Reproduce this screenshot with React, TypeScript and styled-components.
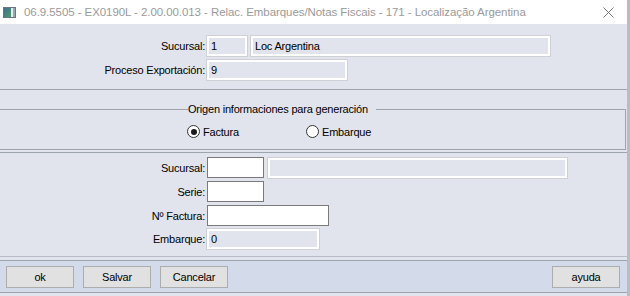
import styled, { createGlobalStyle } from "styled-components";

const GlobalStyle = createGlobalStyle`
  html, body {
    margin: 0;
    padding: 0;
    background: #ffffff;
  }
  body {
    font-family: "Liberation Sans", Arial, sans-serif;
    font-size: 11px;
    letter-spacing: -0.2px;
    color: #000;
  }
`;

const Window = styled.div`
  width: 630px;
  height: 296px;
  box-sizing: border-box;
  display: flex;
  flex-direction: column;
  border-right: 3px solid #b9bcc3;
  background: #e1e4ec;
  overflow: hidden;
`;

const TitleBar = styled.div`
  height: 24px;
  flex: none;
  background: #ffffff;
  display: flex;
  align-items: center;
  padding-left: 3px;
  gap: 8px;
`;

const Title = styled.span`
  flex: 1;
  font-size: 11.5px;
  color: #9a9a9a;
  white-space: nowrap;
  letter-spacing: -0.07px;
`;

const CloseButton = styled.span`
  width: 30px;
  height: 24px;
  display: flex;
  align-items: center;
  justify-content: center;
  margin-right: 4px;
`;

const Section = styled.div<{ $top: number; $bottom: number; $line?: string }>`
  padding: ${(p) => p.$top}px 0 ${(p) => p.$bottom}px;
  border-bottom: 1px solid ${(p) => p.$line ?? "#9ea4ae"};
`;

const Form = styled.div<{ $gap: number }>`
  display: grid;
  grid-template-columns: 205px 1fr;
  column-gap: 2px;
  row-gap: ${(p) => p.$gap}px;
  align-items: center;
`;

const Label = styled.span`
  text-align: right;
  white-space: nowrap;
`;

const Fields = styled.div`
  display: flex;
  gap: 4px;
  align-items: center;
`;

const ReadOnly = styled.div<{ $w: number }>`
  width: ${(p) => p.$w}px;
  height: 20px;
  box-sizing: border-box;
  border: 2px solid #ffffff;
  box-shadow: 0 0 0 1px #cfd1d6;
  padding: 0 2px;
  display: flex;
  align-items: center;
  background: #e1e4ec;
`;

const Editable = styled.div<{ $w: number }>`
  width: ${(p) => p.$w}px;
  height: 21px;
  box-sizing: border-box;
  border: 1px solid #7a7a7a;
  background: #ffffff;
`;

const Group = styled.fieldset`
  margin: 13px 1px 0 0;
  padding: 0;
  border: none;
  border-top: 1px solid #9ea4ae;
  border-right: 1px solid #9ea4ae;
  border-bottom: 1px solid #9ea4ae;
  height: 47px;
  box-sizing: border-box;
`;

const Legend = styled.legend`
  margin-left: 188px;
  padding: 0 8px 0 0;
  line-height: 13px;
`;

const RadioRow = styled.div`
  display: flex;
  align-items: center;
  padding: 9px 0 0 187px;
`;

const RadioOption = styled.label<{ $w: number }>`
  width: ${(p) => p.$w}px;
  display: flex;
  align-items: center;
  gap: 3px;
`;

const RadioCircle = styled.span<{ $on?: boolean }>`
  width: 13px;
  height: 13px;
  box-sizing: border-box;
  border-radius: 50%;
  border: 1px solid #333333;
  background: #ffffff;
  display: flex;
  align-items: center;
  justify-content: center;
  &::after {
    content: "";
    width: 6px;
    height: 6px;
    border-radius: 50%;
    background: ${(p) => (p.$on ? "#1a1a1a" : "transparent")};
  }
`;

const Gap = styled.div`
  height: 2px;
  border-bottom: 1px solid #9ea4ae;
`;

const Spacer = styled.div`
  height: 3px;
  flex: none;
`;

const ButtonBar = styled.div`
  flex: none;
  height: 31px;
  background: #d3dbeb;
  border-top: 1px solid #9ea4ae;
  border-bottom: 1px solid #9ea4ae;
  display: flex;
  align-items: center;
  padding: 0 7px 0 6px;
  gap: 9px;
`;

const Button = styled.button<{ $push?: boolean }>`
  width: 68px;
  height: 22px;
  margin-left: ${(p) => (p.$push ? "auto" : "0")};
  background: #e1e1e1;
  border: 1px solid #adadad;
  font-family: "Liberation Sans", Arial, sans-serif;
  font-size: 11px;
  letter-spacing: -0.2px;
  color: #000;
  padding: 0;
`;

function AppIcon() {
  return (
    <svg width="13" height="11" viewBox="0 0 13 11">
      <defs>
        <linearGradient id="g" x1="0" y1="0" x2="1" y2="1">
          <stop offset="0" stopColor="#3d6f8f" />
          <stop offset="1" stopColor="#4f9a6a" />
        </linearGradient>
      </defs>
      <rect x="0" y="0" width="13" height="11" fill="#6b7480" />
      <rect x="1" y="1" width="7" height="9" fill="url(#g)" />
      <rect x="8" y="1" width="2" height="9" fill="#e8ecef" />
      <rect x="10" y="1" width="2" height="9" fill="#9aa6b0" />
    </svg>
  );
}

export default function App() {
  return (
    <>
      <GlobalStyle />
      <Window>
        <TitleBar>
          <AppIcon />
          <Title>
            06.9.5505 - EX0190L - 2.00.00.013 - Relac. Embarques/Notas Fiscais - 171 - Localização Argentina
          </Title>
          <CloseButton>
            <svg width="11" height="11" viewBox="0 0 11 11">
              <path d="M0.5 0.5 L10.5 10.5 M10.5 0.5 L0.5 10.5" stroke="#7a7a7a" strokeWidth="1" />
            </svg>
          </CloseButton>
        </TitleBar>

        <Section $top={12} $bottom={9}>
          <Form $gap={4}>
            <Label>Sucursal:</Label>
            <Fields>
              <ReadOnly $w={40}>1</ReadOnly>
              <ReadOnly $w={299}>Loc Argentina</ReadOnly>
            </Fields>
            <Label>Proceso Exportación:</Label>
            <Fields>
              <ReadOnly $w={140}>9</ReadOnly>
            </Fields>
          </Form>
        </Section>

        <Group>
          <Legend>Origen informaciones para generación</Legend>
          <RadioRow>
            <RadioOption $w={119}>
              <RadioCircle $on />
              Factura
            </RadioOption>
            <RadioOption $w={100}>
              <RadioCircle />
              Embarque
            </RadioOption>
          </RadioRow>
        </Group>
        <Gap />

        <Section $top={4} $bottom={7} $line="#b7bcc6">
          <Form $gap={3}>
            <Label>Sucursal:</Label>
            <Fields>
              <Editable $w={57} />
              <ReadOnly $w={299} />
            </Fields>
            <Label>Serie:</Label>
            <Fields>
              <Editable $w={57} />
            </Fields>
            <Label>Nº Factura:</Label>
            <Fields>
              <Editable $w={122} />
            </Fields>
            <Label>Embarque:</Label>
            <Fields>
              <ReadOnly $w={112}>0</ReadOnly>
            </Fields>
          </Form>
        </Section>
        <Spacer />

        <ButtonBar>
          <Button>ok</Button>
          <Button>Salvar</Button>
          <Button>Cancelar</Button>
          <Button $push>ayuda</Button>
        </ButtonBar>
      </Window>
    </>
  );
}
